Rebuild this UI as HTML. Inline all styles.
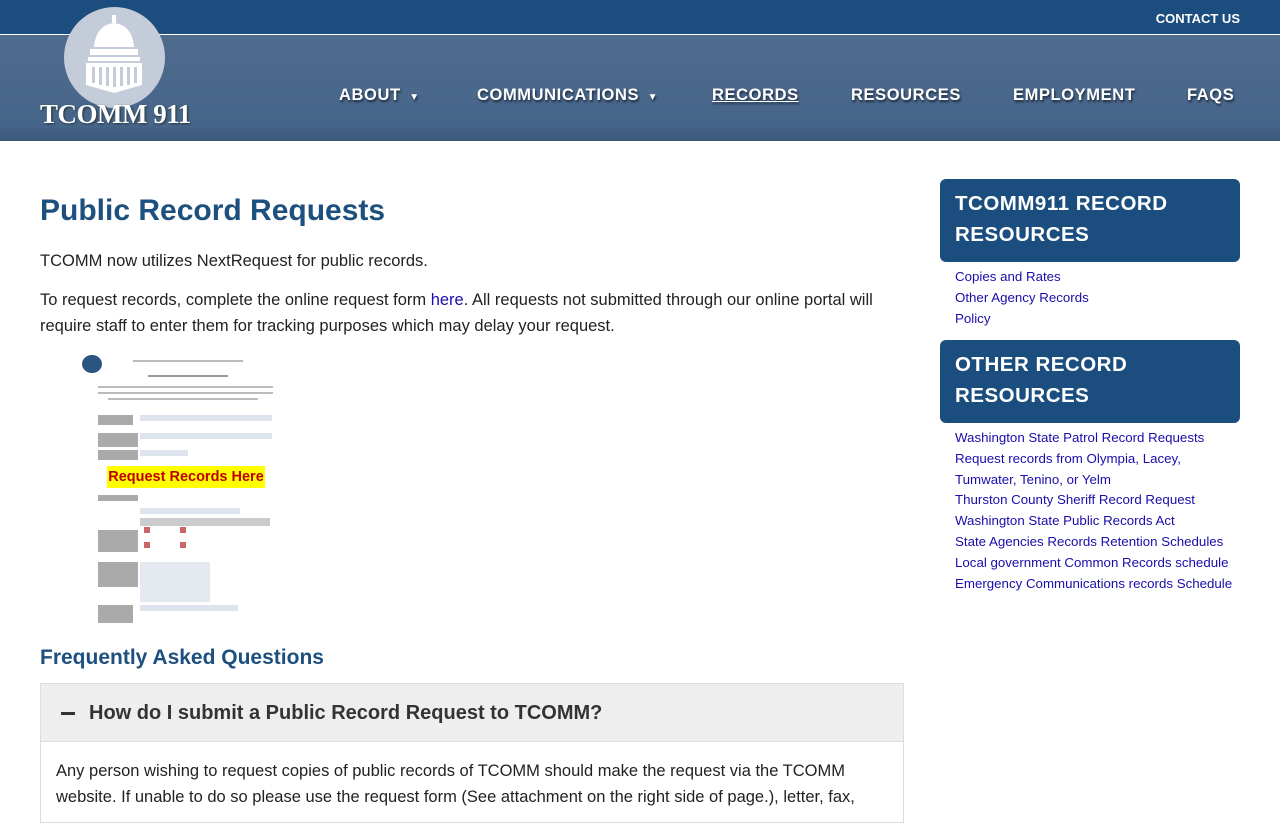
<!DOCTYPE html>
<html><head><meta charset="utf-8"><style>
*{box-sizing:border-box;margin:0;padding:0}
body{width:1280px;height:800px;overflow:hidden;background:#fff;font-family:"Liberation Sans",sans-serif;color:#222;position:relative}
.top{height:35px;background:#1b4e7f;border-bottom:1px solid #fff;position:relative}
.top span{position:absolute;right:40px;top:11px;color:#fff;font-weight:bold;font-size:13px}
.nav{height:106px;background:linear-gradient(#4f6c8e,#47658a 85%,#3c5879);position:relative}
.nav a{position:absolute;top:51px;color:#fff;font-weight:bold;font-size:16.5px;letter-spacing:.6px;text-decoration:none;text-shadow:1px 2px 2px #1a2a3a}
.logo{position:absolute;left:64px;top:7px;width:101px;height:101px;border-radius:50%;background:#c4ccd9;z-index:2}
.logotext{position:absolute;left:40px;top:99px;font-family:"Liberation Serif",serif;font-weight:bold;font-size:27px;color:#fff;text-shadow:1px 1px 2px #233;letter-spacing:-.5px;z-index:2}
h1{position:absolute;left:40px;top:194px;font-size:30px;color:#1d4f7f;font-weight:bold}
.p{position:absolute;left:40px;font-size:16.5px;line-height:26px;width:860px;color:#222}
a.l{color:#1a0dab;text-decoration:none}
h2{position:absolute;left:40px;top:646px;font-size:21px;color:#1d4f7f}
.acc{position:absolute;left:40px;top:683px;width:864px;height:140px;border:1px solid #ddd}
.acch{height:58px;background:#eee;border-bottom:1px solid #ddd;font-size:20px;font-weight:bold;color:#333;padding:18px 0 0 48px;position:relative}
.acch:before{content:"";position:absolute;left:20px;top:28px;width:14px;height:3px;background:#333}
.accb{padding:16px 15px;font-size:16.5px;line-height:26px}
.box{position:absolute;left:940px;width:300px;height:83px;background:#1b4e7f;border-radius:6px;color:#fff;font-weight:bold;font-size:20.5px;line-height:31px;padding:9px 15px;letter-spacing:.5px}
.links{position:absolute;left:955px;font-size:13.3px;line-height:20.8px}
.links a{display:block;color:#1a0dab;text-decoration:none}
.form{position:absolute;left:78px;top:350px;width:200px;height:275px}
.fl{position:absolute;height:2px;background:#999}
</style></head><body>
<div class="top"><span>CONTACT US</span></div>
<div class="nav">
<a style="left:339px">ABOUT <small style="font-size:10px">&nbsp;▼</small></a>
<a style="left:477px">COMMUNICATIONS <small style="font-size:10px">&nbsp;▼</small></a>
<a style="left:712px;text-decoration:underline">RECORDS</a>
<a style="left:851px">RESOURCES</a>
<a style="left:1013px">EMPLOYMENT</a>
<a style="left:1187px">FAQS</a>
</div>
<div class="logo"><svg width="101" height="101" viewBox="0 0 101 101"><g fill="#fff"><rect x="48" y="8" width="4" height="8"/><path d="M30 40 Q32 18 50 16 Q68 18 70 40Z"/><rect x="26" y="42" width="48" height="6"/><rect x="24" y="50" width="52" height="4"/><path d="M22 56h56v22l-28 8l-28-8z"/></g><g fill="#c4ccd9"><rect x="28" y="60" width="3" height="16"/><rect x="35" y="60" width="3" height="18"/><rect x="42" y="60" width="3" height="19"/><rect x="49" y="60" width="3" height="20"/><rect x="56" y="60" width="3" height="19"/><rect x="63" y="60" width="3" height="18"/><rect x="70" y="60" width="3" height="16"/></g></svg></div>
<div class="logotext">TCOMM 911</div>
<h1>Public Record Requests</h1>
<div class="p" style="top:248px">TCOMM now utilizes NextRequest for public records.</div>
<div class="p" style="top:287px">To request records, complete the online request form <a class="l">here</a>. All requests not submitted through our online portal will require staff to enter them for tracking purposes which may delay your request.</div>
<div class="form">
<div style="position:absolute;left:4px;top:5px;width:20px;height:18px;border-radius:50%;background:#2a5580"></div>
<div class="fl" style="left:55px;top:10px;width:110px;background:#bbb"></div>
<div class="fl" style="left:70px;top:25px;width:80px"></div>
<div class="fl" style="left:20px;top:36px;width:175px;background:#bbb"></div>
<div class="fl" style="left:20px;top:42px;width:175px;background:#bbb"></div>
<div class="fl" style="left:30px;top:48px;width:150px;background:#bbb"></div>
<div class="fl" style="left:20px;top:65px;width:35px;height:10px;background:#aaa"></div>
<div class="fl" style="left:62px;top:65px;width:132px;height:6px;background:#dde4ee"></div>
<div class="fl" style="left:20px;top:83px;width:40px;height:14px;background:#aaa"></div>
<div class="fl" style="left:62px;top:83px;width:132px;height:6px;background:#dde4ee"></div>
<div class="fl" style="left:20px;top:100px;width:40px;height:10px;background:#aaa"></div>
<div class="fl" style="left:62px;top:100px;width:48px;height:6px;background:#dde4ee"></div>
<div style="position:absolute;left:29px;top:116px;width:158px;height:22px;background:#ffff00;color:#c00000;font-weight:bold;font-size:14.5px;line-height:22px;white-space:nowrap;text-align:center">Request Records Here</div>
<div class="fl" style="left:20px;top:145px;width:40px;height:6px;background:#aaa"></div>
<div class="fl" style="left:62px;top:158px;width:100px;height:6px;background:#dde4ee"></div>
<div class="fl" style="left:62px;top:168px;width:130px;height:8px;background:#ccc"></div>
<div class="fl" style="left:20px;top:180px;width:40px;height:22px;background:#aaa"></div>
<div class="fl" style="left:66px;top:177px;width:6px;height:6px;background:#c66"></div>
<div class="fl" style="left:102px;top:177px;width:6px;height:6px;background:#c66"></div>
<div class="fl" style="left:66px;top:192px;width:6px;height:6px;background:#c66"></div>
<div class="fl" style="left:102px;top:192px;width:6px;height:6px;background:#c66"></div>
<div class="fl" style="left:20px;top:212px;width:40px;height:25px;background:#aaa"></div>
<div class="fl" style="left:62px;top:212px;width:70px;height:40px;background:#e4e8ef"></div>
<div class="fl" style="left:20px;top:255px;width:35px;height:18px;background:#aaa"></div>
<div class="fl" style="left:62px;top:255px;width:98px;height:6px;background:#dde4ee"></div>
</div>
<h2>Frequently Asked Questions</h2>
<div class="acc"><div class="acch">How do I submit a Public Record Request to TCOMM?</div>
<div class="accb">Any person wishing to request copies of public records of TCOMM should make the request via the TCOMM website. If unable to do so please use the request form (See attachment on the right side of page.), letter, fax,</div></div>
<div class="box" style="top:179px">TCOMM911 RECORD RESOURCES</div>
<div class="links" style="top:267px"><a>Copies and Rates</a><a>Other Agency Records</a><a>Policy</a></div>
<div class="box" style="top:340px">OTHER RECORD RESOURCES</div>
<div class="links" style="top:428px"><a>Washington State Patrol Record Requests</a><a>Request records from Olympia, Lacey,<br>Tumwater, Tenino, or Yelm</a><a>Thurston County Sheriff Record Request</a><a>Washington State Public Records Act</a><a>State Agencies Records Retention Schedules</a><a>Local government Common Records schedule</a><a>Emergency Communications records Schedule</a></div>
</body></html>
